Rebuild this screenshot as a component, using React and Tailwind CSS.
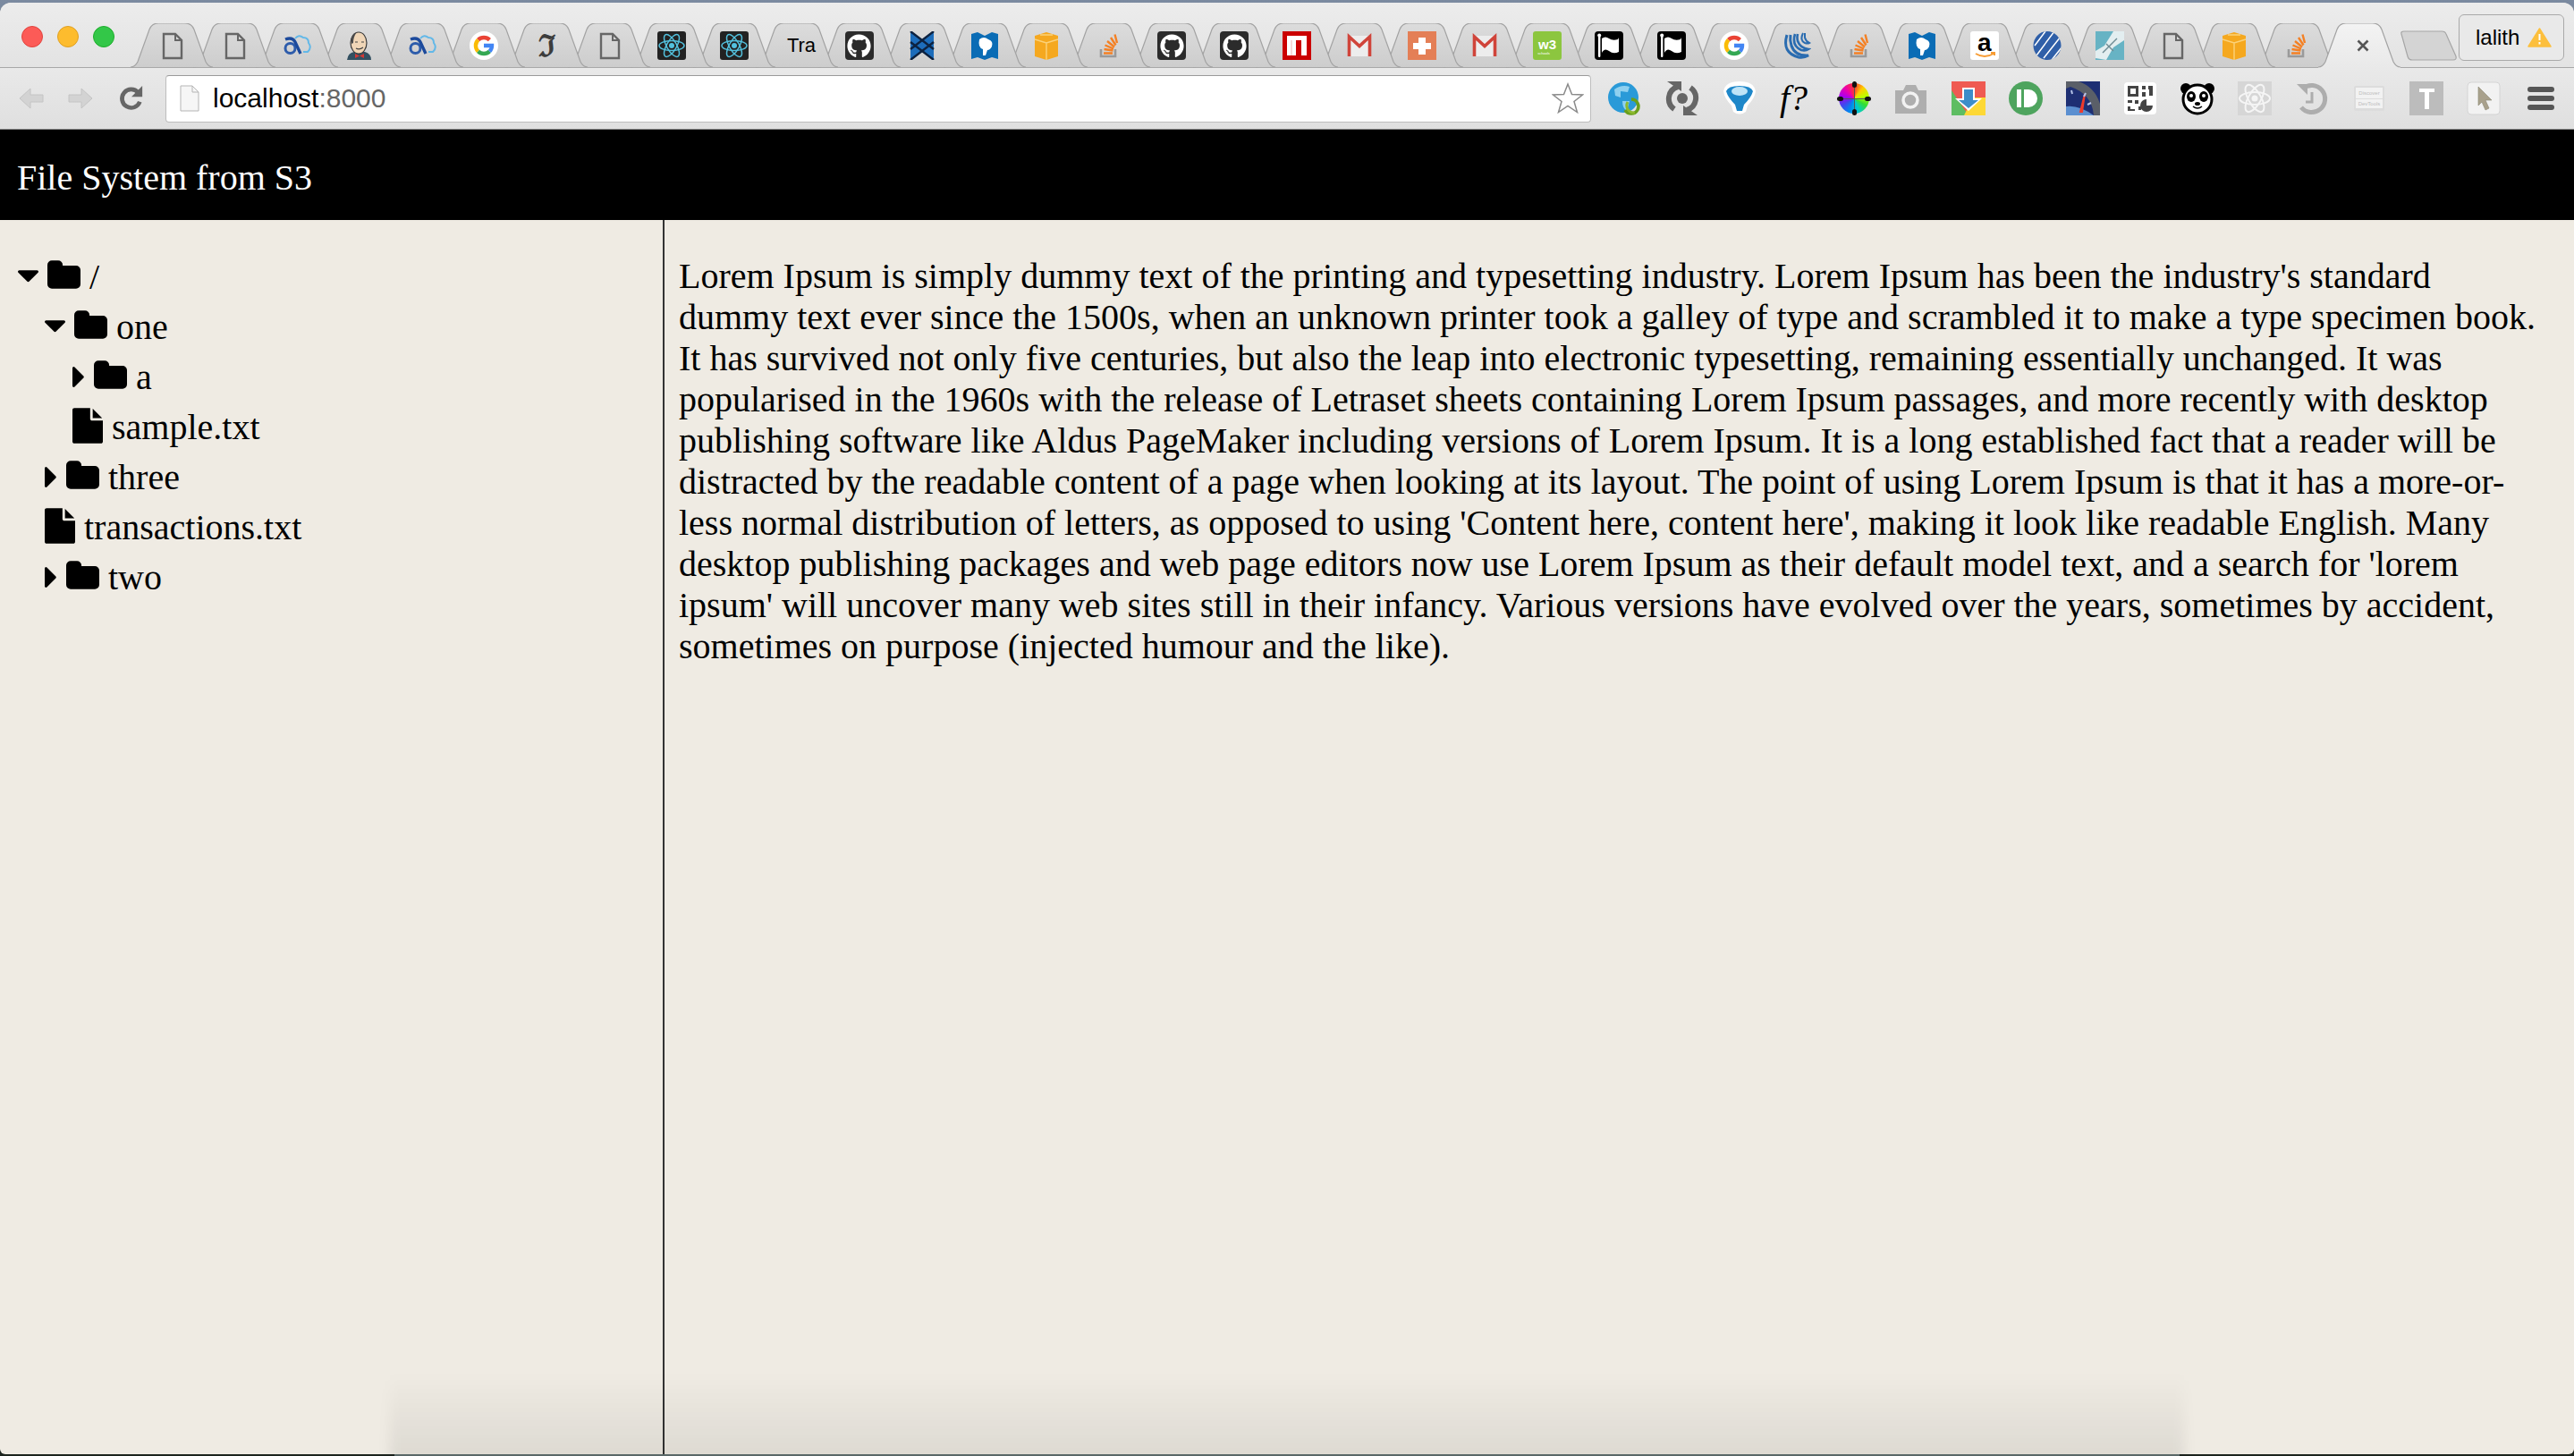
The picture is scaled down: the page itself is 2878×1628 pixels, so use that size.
import React from "react";
import { FaGithub } from "react-icons/fa";

const SERIF = "font-['Liberation_Serif','Times_New_Roman',serif]";
const SANS = "font-['Liberation_Sans',Arial,sans-serif]";

const V = ({ s = 32, children, className = "" }) => (
  <svg width={s} height={s} viewBox={`0 0 ${s} ${s}`} className={`block shrink-0 ${className}`}>{children}</svg>
);

const Page = () => (
  <V><path d="M7 3h13l7 7v20H7z" fill="none" stroke="#666" strokeWidth="2.4" /><path d="M20 3v7h7" fill="none" stroke="#666" strokeWidth="2" /></V>
);
const Atl = () => (
  <V>
    <path d="M14 8Q18 3 23 7Q29 7 29 13Q33 18 28 23H23" fill="none" stroke="#62b8e8" strokeWidth="2" />
    <circle cx="8.5" cy="19" r="5.5" fill="none" stroke="#2d5cab" strokeWidth="3" />
    <path d="M3 9Q11 6 14 12L20 25" fill="none" stroke="#1c4a9c" strokeWidth="3.4" />
  </V>
);
const Jenkins = () => (
  <V>
    <path d="M2 32Q3 24 10 23L22 23Q29 25 29 32z" fill="#335061" />
    <ellipse cx="15" cy="13" rx="9" ry="12" fill="#f0d6b7" stroke="#3a3a3a" strokeWidth="1.2" />
    <path d="M7 14Q5 4 13 1Q9 6 9 13z" fill="#4b4b4b" />
    <path d="M11 12h3M18 12h3M12 19Q16 21 20 18" stroke="#444" strokeWidth="1.2" fill="none" />
    <path d="M11 25l5 2.5l5-2.5v5l-5-2.5l-5 2.5z" fill="#d33833" />
  </V>
);
const G = () => (
  <V>
    <circle cx="16" cy="16" r="16" fill="#fff" />
    <g fill="none" strokeWidth="4.4">
      <path d="M9.6 9.6A9 9 0 0 1 22.4 9.6" stroke="#ea4335" />
      <path d="M9.6 9.6A9 9 0 0 0 9.6 22.4" stroke="#fbbc05" />
      <path d="M9.6 22.4A9 9 0 0 0 22.4 22.4" stroke="#34a853" />
      <path d="M22.4 22.4A9 9 0 0 0 25 16H16" stroke="#4285f4" />
    </g>
  </V>
);
const Fraktur = () => (
  <span className="block w-8 h-8 text-center text-[34px] leading-[32px] text-[#3c3c3c] font-['DejaVu_Serif',serif] font-bold">ℑ</span>
);
const ReactIco = () => (
  <V>
    <rect width="32" height="32" rx="3" fill="#222" />
    <g fill="none" stroke="#53c1de" strokeWidth="1.5">
      <ellipse cx="16" cy="16" rx="14" ry="5.5" />
      <ellipse cx="16" cy="16" rx="14" ry="5.5" transform="rotate(60 16 16)" />
      <ellipse cx="16" cy="16" rx="14" ry="5.5" transform="rotate(120 16 16)" />
    </g>
    <circle cx="16" cy="16" r="3" fill="#53c1de" />
  </V>
);
const Tra = () => <span className={`block w-8 h-8 pl-[5px] text-[22px] leading-[32px] text-black whitespace-nowrap ${SANS}`}>Tra</span>;
const Gh = () => (
  <div className="w-8 h-8 rounded bg-[#2b2b2b] flex items-center justify-center">
    <FaGithub className="text-white text-[27px]" />
  </div>
);
const Backbone = () => (
  <V>
    <polygon points="3,0 16,9 29,0 29,32 16,23 3,32" fill="#1d6dbb" />
    <path d="M3 0L29 20M29 0L3 20M3 12L29 32M29 12L3 32" stroke="#0d2240" strokeWidth="2.4" />
  </V>
);
const Book = () => (
  <V>
    <polygon points="1,3 8,1 16,5 24,1 31,3 31,31 24,29 16,32 8,29 1,31" fill="#0a6cb5" />
    <path d="M10 9Q15 5 20 9Q26 11 24 17Q22 21 19 21L17 27H14L14 20Q8 18 10 9z" fill="#fff" />
  </V>
);
const Box = () => (
  <V>
    <polygon points="16,1 29,5 29,28 16,32 3,28 3,5" fill="#f5a81f" />
    <path d="M3 9L16 13L29 9M16 13V32M9 4L23 4" fill="none" stroke="#fbd27a" strokeWidth="1.4" />
  </V>
);
const So = () => (
  <V>
    <path d="M7 20v8h16v-8" fill="none" stroke="#9a9a9a" strokeWidth="2.6" />
    <path d="M10 24.5h10M10.5 20l10 1.5M11.5 15.5l9.5 4M14 11l8 6.5M18 7l5.5 8.5M22.5 3.5L25 13" stroke="#f48024" strokeWidth="2.4" fill="none" />
  </V>
);
const Npm = () => (
  <V>
    <rect width="32" height="32" fill="#cb0000" />
    <rect x="5" y="5" width="22" height="22" fill="#fff" />
    <rect x="15" y="10" width="6" height="17" fill="#cb0000" />
    <rect x="9" y="10" width="2" height="17" fill="#f7d9d9" />
  </V>
);
const Gmail = () => (
  <V>
    <polygon points="3,5 29,5 29,28 3,28" fill="#ededed" />
    <path d="M4.5 28V6L16 16.5L27.5 6V28" fill="none" stroke="#d0443a" strokeWidth="3.6" />
  </V>
);
const Cross = () => (
  <V>
    <rect width="32" height="32" fill="#e47f56" />
    <path d="M12 7h8v6h6v7h-6v6h-8v-6H6v-7h6z" fill="#fff" />
  </V>
);
const W3 = () => (
  <V>
    <rect width="32" height="32" rx="3" fill="#8cc63f" />
    <text x="16" y="20" textAnchor="middle" fontFamily="Liberation Sans" fontSize="15" fontWeight="700" fill="#fff">w3</text>
    <text x="12" y="26" textAnchor="middle" fontFamily="Liberation Sans" fontSize="4" fill="#fff">schools</text>
  </V>
);
const Flag = () => (
  <V>
    <rect width="32" height="32" rx="4" fill="#000" />
    <rect x="4" y="5" width="2.4" height="24" rx="1.2" fill="#fff" />
    <path d="M8 8Q12 5 16 8T26 9L27 7V23Q21 26 16 22T8 24z" fill="#fff" />
    <circle cx="5.2" cy="4.5" r="2" fill="#fff" />
  </V>
);
const Jq = () => (
  <V>
    <g fill="none" stroke="#2a6cb0">
      <path d="M5 4Q-1 24 18 29Q24 30 29 27Q14 28 10 16Q8 10 9 4" strokeWidth="3" />
      <path d="M14 3Q10 16 21 21Q26 22 29 20Q20 19 17 11Q16 7 17 3" strokeWidth="2.6" />
      <path d="M23 2Q19 10 25 13Q28 14 30 13Q26 11 25 7Q25 4 25 2" strokeWidth="2" />
    </g>
  </V>
);
const Amazon = () => (
  <div className="w-8 h-8 relative rounded-[3px] bg-white">
    <span className={`block text-center text-[28px] leading-[26px] font-bold text-black ${SANS}`}>a</span>
    <svg className="absolute left-0 top-0" width="32" height="32" viewBox="0 0 32 32">
      <path d="M6 25Q16 31 26 25M23 24h4v3" fill="none" stroke="#f79c34" strokeWidth="2" />
    </svg>
  </div>
);
const Stripes = () => (
  <V>
    <clipPath id="stripeclip"><ellipse cx="16" cy="16" rx="15.5" ry="16" /></clipPath>
    <g clipPath="url(#stripeclip)">
      <rect width="32" height="32" fill="#2f5fa8" />
      <path d="M2 16L14 0M4 27L24 0M12 30L31 6M21 32L33 17" stroke="#fff" strokeWidth="1.5" />
    </g>
  </V>
);
const Teal = () => (
  <V>
    <rect x="0" width="32" height="32" fill="#67b3c4" />
    <path d="M32 0L20 0L10 16L0 22V30L12 32L20 18L32 10z" fill="#e3eef0" />
    <path d="M8 24L24 8M12 14L20 22" stroke="#6d8a92" strokeWidth="1.4" />
  </V>
);

const order = [Page, Page, Atl, Jenkins, Atl, G, Fraktur, Page, ReactIco, ReactIco, Tra, Gh, Backbone, Book, Box, So, Gh, Gh, Npm, Gmail, Cross, Gmail, W3, Flag, Flag, G, Jq, So, Book, Amazon, Stripes, Teal, Page, Box, So];

const TAB = "M0 49C4 49 6 47 8 43L21 7C23 2 26 0 31 0H61C66 0 69 2 71 7L84 43C86 47 88 49 92 49";

function Tab({ Icon, i }) {
  return (
    <div className="relative w-[92px] h-[50px] -mb-px mr-[-22.12px] flex items-center justify-center shrink-0" style={{ zIndex: 100 - i }}>
      <svg className="absolute inset-0" width="92" height="50" viewBox="0 0 92 50">
        <defs>
          <linearGradient id="tabfill" x1="0" y1="0" x2="0" y2="1">
            <stop offset="0" stopColor="#dcdcdc" />
            <stop offset="1" stopColor="#cdcdcd" />
          </linearGradient>
        </defs>
        <path d={TAB} fill="url(#tabfill)" stroke="#a3a3a3" strokeWidth="1.2" />
      </svg>
      <div className="relative"><Icon /></div>
    </div>
  );
}

function ActiveTab() {
  return (
    <div className="relative w-[92px] h-[50px] -mb-px mr-[-22px] flex items-center justify-center shrink-0 z-[200]">
      <svg className="absolute inset-0" width="92" height="50" viewBox="0 0 92 50">
        <defs>
          <linearGradient id="activefill" x1="0" y1="0" x2="0" y2="1">
            <stop offset="0" stopColor="#f3f3f3" />
            <stop offset="1" stopColor="#e9e9e9" />
          </linearGradient>
        </defs>
        <path d={`${TAB}V50H0Z`} fill="url(#activefill)" />
        <path d={TAB} fill="none" stroke="#a3a3a3" strokeWidth="1.2" />
      </svg>
      <svg className="relative ml-[8px]" width="14" height="14" viewBox="0 0 14 14">
        <path d="M1.5 1.5L12.5 12.5M12.5 1.5L1.5 12.5" stroke="#555" strokeWidth="2.6" />
      </svg>
    </div>
  );
}

function TabStrip() {
  return (
    <div className="relative flex items-end h-[73px] shrink-0 border-b border-[#a8a8a8] bg-linear-to-b from-[#ececec] to-[#e3e3e3] rounded-t-[12px]">
      <div className="self-start flex gap-[16px] pl-[24px] pt-[26px] w-[146px] shrink-0">
        <div className="w-6 h-6 rounded-full bg-[#fc5b57] border border-[#e0443e]" />
        <div className="w-6 h-6 rounded-full bg-[#fdbc2e] border border-[#dfa023]" />
        <div className="w-6 h-6 rounded-full bg-[#33c748] border border-[#1dad2b]" />
      </div>
      {order.map((Icon, i) => <Tab key={i} Icon={Icon} i={i} />)}
      <ActiveTab />
      <svg className="shrink-0 ml-[21px] mb-[7px]" width="65" height="34" viewBox="0 0 65 34">
        <path d="M2 4Q1 1 5 1H47Q51 1 52 4L63 29Q64 33 60 33H14Q10 33 9 29z" fill="#d4d4d4" stroke="#a6a6a6" strokeWidth="1.2" />
      </svg>
      <div className="self-start shrink-0 ml-auto mr-[11px] mt-[13px] w-[118px] h-[52px] rounded-[6px] border border-[#a9a9a9] bg-[#e9e9e9] flex items-center pl-[18px] gap-[9px]">
        <span className={`text-[24px] text-black leading-none ${SANS}`}>lalith</span>
        <svg width="27" height="22" viewBox="0 0 27 22">
          <path d="M13.5 1L26 21H1z" fill="#fcbf3d" stroke="#fcbf3d" strokeLinejoin="round" strokeWidth="1.5" />
          <path d="M13.5 7v7M13.5 16v2.4" stroke="#fff" strokeWidth="2" />
        </svg>
      </div>
    </div>
  );
}

const Globe = () => (
  <V s={38}>
    <circle cx="17" cy="18" r="17" fill="#2a9ad8" />
    <path d="M7 9Q15 3 24 6L22 12L14 11L14 18L8 16zM16 22L24 22L21 33Q16 30 16 22z" fill="#8fd0ef" />
    <path d="M26 20A8 8 0 1 1 19 32" fill="none" stroke="#6a9f1c" strokeWidth="3.5" />
    <path d="M30 35A8 8 0 0 1 22 23" fill="none" stroke="#8cb92e" strokeWidth="3" />
  </V>
);
const Cycle = () => (
  <V s={38}>
    <g fill="none" stroke="#666" strokeWidth="6">
      <path d="M14 6A14 14 0 0 0 10 31" />
      <path d="M24 32A14 14 0 0 0 28 7" />
    </g>
    <path d="M2 0H18V11zM36 38H20V27z" fill="#666" />
    <circle cx="19" cy="19" r="6" fill="#666" />
  </V>
);
const Funnel = () => (
  <V s={38}>
    <path d="M1 11Q3 0 19 0Q35 0 37 11Q36 19 28 27L26 34Q19 39 12 34L10 27Q2 19 1 11z" fill="#fff" />
    <path d="M4 11Q6 5 19 5Q32 5 34 11Q32 18 24 26L22 33H16L14 26Q6 18 4 11z" fill="#1e87c9" />
    <ellipse cx="19" cy="11" rx="9" ry="5" fill="#bfe4f7" />
  </V>
);
const Fq = () => (
  <span className={`block w-[38px] h-[38px] text-[40px] leading-[38px] italic text-black whitespace-nowrap ${SERIF}`}>f?</span>
);
const Wheel = () => (
  <div className="relative w-[38px] h-[38px]">
    <div className="absolute left-[2px] top-[2px] w-[34px] h-[34px] rounded-full bg-[conic-gradient(#f33,#fc0,#bf0,#3d3,#0cc,#08e,#44e,#a0e,#e0a,#f33)]" />
    <div className="absolute left-[18.5px] top-0 w-px h-[38px] bg-[#555]" />
    <div className="absolute left-0 top-[18.5px] w-[38px] h-px bg-[#555]" />
    <div className="absolute left-[17px] top-0 w-[5px] h-[7px] rounded-full bg-[#111]" />
    <div className="absolute left-[17px] bottom-0 w-[5px] h-[7px] rounded-full bg-[#111]" />
    <div className="absolute left-0 top-[17px] w-[7px] h-[5px] rounded-full bg-[#111]" />
    <div className="absolute right-0 top-[17px] w-[7px] h-[5px] rounded-full bg-[#111]" />
  </div>
);
const Camera = () => (
  <V s={38}>
    <path d="M1 10H10L13 4H24L27 10H36V36H1z" fill="#aeaeae" />
    <circle cx="18" cy="21" r="8" fill="none" stroke="#f2f2f2" strokeWidth="3.5" />
  </V>
);
const Arrow = () => (
  <V s={38}>
    <rect width="38" height="38" fill="#ef5a52" />
    <polygon points="0,10 19,38 0,38" fill="#5ebd62" />
    <polygon points="38,18 38,38 14,38 24,18" fill="#fdd835" />
    <path d="M12 7H26V19H34L19 33L4 19H12z" fill="#fff" />
    <path d="M14 9H24V21H30L19 30L8 21H14z" fill="#3d8dc9" />
  </V>
);
const Pushbullet = () => (
  <V s={38}>
    <circle cx="19" cy="19" r="19" fill="#4ea45e" />
    <rect x="9" y="9" width="5" height="20" fill="#fff" />
    <path d="M17 9H22A10 10 0 0 1 22 29H17z" fill="#fff" />
  </V>
);
const Speed = () => (
  <V s={38}>
    <rect width="38" height="38" fill="#1e2f73" />
    <path d="M0 0H14Q32 6 38 25V38H31Q29 14 5 6L0 8z" fill="#5a5f68" />
    <path d="M0 28Q14 26 31 38H0z" fill="#5b8fd0" />
    <path d="M16 34L21 14L18 34z" fill="#ee3b2b" stroke="#ee3b2b" strokeWidth="2" />
    <path d="M6 10l1 4M22 13l-2 4M28 24l-4 2" stroke="#b6c4e8" strokeWidth="2" />
  </V>
);
const Qr = () => (
  <V s={38}>
    <rect x="1" y="1" width="36" height="36" rx="4" fill="#fff" />
    <g fill="#444">
      <path d="M5 5H17V17H5zM8 8V14H14V8z" fillRule="evenodd" />
      <path d="M21 5h4v4h-4zM28 5h5v4h-5zM29 9h4v7h-4zM21 12h4v5h-4zM5 21h5v3H5zM13 21h4v4h-4zM5 28h3v5H5zM8 31h5v2H8zM17 28h3v4h-3z" />
      <path d="M33 27A7 7 0 1 1 26 20V27z" />
    </g>
  </V>
);
const Panda = () => (
  <V s={38}>
    <circle cx="6" cy="8" r="6" fill="#000" />
    <circle cx="32" cy="8" r="6" fill="#000" />
    <ellipse cx="19" cy="20" rx="16" ry="16" fill="#fff" stroke="#000" strokeWidth="3" />
    <ellipse cx="12" cy="17" rx="5" ry="6" fill="#000" />
    <ellipse cx="26" cy="17" rx="5" ry="6" fill="#000" />
    <circle cx="12" cy="16" r="2" fill="#fff" />
    <circle cx="26" cy="16" r="2" fill="#fff" />
    <ellipse cx="19" cy="25" rx="3" ry="2" fill="#000" />
    <path d="M14 28Q19 32 24 28" fill="none" stroke="#000" strokeWidth="1.5" />
  </V>
);
const ReactGray = () => (
  <V s={38}>
    <rect width="38" height="38" fill="#d6d6d6" />
    <g fill="none" stroke="#f5f5f5" strokeWidth="2">
      <ellipse cx="19" cy="19" rx="17" ry="7" />
      <ellipse cx="19" cy="19" rx="17" ry="7" transform="rotate(60 19 19)" />
      <ellipse cx="19" cy="19" rx="17" ry="7" transform="rotate(120 19 19)" />
    </g>
    <circle cx="19" cy="19" r="3.5" fill="#f5f5f5" />
  </V>
);
const History = () => (
  <V s={38}>
    <path d="M9 8A15 15 0 1 1 7 29" fill="none" stroke="#adadad" strokeWidth="5" />
    <path d="M2 3H14V15z" fill="#adadad" />
    <path d="M19 12V23H12" fill="none" stroke="#adadad" strokeWidth="3" />
  </V>
);
const DevTools = () => (
  <div className={`w-[34px] h-[28px] mx-[2px] my-[5px] rounded-[2px] bg-[#dcdcdc] p-[2px] flex flex-col gap-px text-[6px] leading-[12px] text-center text-[#bdbdbd] overflow-hidden whitespace-nowrap ${SANS}`}>
    <div className="bg-[#f2f2f2] h-[12px]">Discover</div>
    <div className="bg-[#f2f2f2] h-[10px] leading-[10px]">DevTools</div>
  </div>
);
const TIco = () => (
  <V s={38}>
    <rect width="38" height="38" fill="#bcbcbc" />
    <path d="M11 8H28V12H22V31H17V12H11z" fill="#fff" />
  </V>
);
const Cursor = () => (
  <V s={38}>
    <rect x="1" y="1" width="36" height="36" rx="4" fill="#f2f2f2" stroke="#d4d4d4" />
    <path d="M13 6L28 21L21 21L25 30L21 32L17 23L13 27z" fill="#a9a18c" stroke="#8c8674" strokeWidth="0.6" />
  </V>
);
const Menu = () => (
  <div className="w-[38px] h-[38px] px-[4px] flex flex-col justify-center gap-[4px]">
    <div className="h-[6px] rounded-full bg-[#555]" />
    <div className="h-[6px] rounded-full bg-[#555]" />
    <div className="h-[6px] rounded-full bg-[#555]" />
  </div>
);

const tools = [Globe, Cycle, Funnel, Fq, Wheel, Camera, Arrow, Pushbullet, Speed, Qr, Panda, ReactGray, History, DevTools, TIco, Cursor, Menu];

function Toolbar() {
  return (
    <div className="flex items-center h-[69px] shrink-0 bg-linear-to-b from-[#e9e9e9] to-[#dfdfdf] border-b border-[#8a8a8a]">
      <div className="flex items-center w-[185px] shrink-0 pl-[20px]">
        <svg width="30" height="26" viewBox="0 0 30 26">
          <path d="M14 2L2 13L14 24V17H28V9H14z" fill="#d3d3d3" stroke="#c4c4c4" />
        </svg>
        <svg className="ml-[25px]" width="30" height="26" viewBox="0 0 30 26">
          <path d="M16 2L28 13L16 24V17H2V9H16z" fill="#d3d3d3" stroke="#c4c4c4" />
        </svg>
        <svg className="ml-[28px]" width="28" height="32" viewBox="0 0 30 32">
          <path d="M23 9A11 11 0 1 0 25 20" fill="none" stroke="#666" strokeWidth="5" />
          <path d="M28 1V14H15z" fill="#666" />
        </svg>
      </div>
      <div className="flex items-center w-[1594px] h-[53px] shrink-0 bg-white rounded-[4px] border border-[#bdbdbd] border-t-[#9a9a9a] pl-[15px] pr-[7px]">
        <svg width="22" height="30" viewBox="0 0 22 30">
          <path d="M1 1H14L21 8V29H1z" fill="#f6f6f6" stroke="#b5b5b5" />
          <path d="M14 1V8H21" fill="none" stroke="#b5b5b5" />
        </svg>
        <span className={`ml-[15px] text-[30px] leading-none text-black ${SANS}`}>
          localhost<span className="text-[#666]">:8000</span>
        </span>
        <svg className="ml-auto" width="36" height="36" viewBox="0 0 36 36">
          <path d="M18 2L22.5 13.5L34.5 14L25 21.5L28.5 33.5L18 26.5L7.5 33.5L11 21.5L1.5 14L13.5 13.5z" fill="#fff" stroke="#8a8a8a" strokeWidth="1.5" />
        </svg>
      </div>
      <div className="flex items-center gap-[26px] ml-[19px]">
        {tools.map((T, i) => <T key={i} />)}
      </div>
    </div>
  );
}

const Caret = ({ down }) => down ? (
  <svg className="w-[23px] h-[23px] shrink-0" viewBox="384 448 1024 1024"><path d="M1408 704q0 26-19 45l-448 448q-19 19-45 19t-45-19l-448-448q-19-19-19-45t19-45 45-19h896q26 0 45 19t19 45z" /></svg>
) : (
  <svg className="w-[14px] h-[23px] shrink-0" viewBox="576 384 630 1024" preserveAspectRatio="xMinYMid meet"><path d="M1152 896q0 26-19 45l-448 448q-19 19-45 19t-45-19-19-45v-896q0-26 19-45t45-19 45 19l448 448q19 19 19 45z" /></svg>
);
const Folder = () => (
  <svg className="w-[37px] h-[32px] shrink-0 -mt-[4px]" viewBox="64 128 1664 1408"><path d="M1728 608v704q0 92-66 158t-158 66h-1216q-92 0-158-66t-66-158v-960q0-92 66-158t158-66h320q92 0 158 66t66 158v32h672q92 0 158 66t66 158z" /></svg>
);
const File = () => (
  <svg className="w-[34px] h-[40px] shrink-0 -mt-[2px]" viewBox="128 0 1536 1792"><path d="M1152 512v-472q22 14 36 28l408 408q14 14 28 36h-472zm-128 32q0 40 28 68t68 28h544v1056q0 40-28 68t-68 28h-1344q-40 0-68-28t-28-68v-1600q0-40 28-68t68-28h800v544z" /></svg>
);

const tree = [
  { label: "/", depth: 0, type: "open" },
  { label: "one", depth: 1, type: "open" },
  { label: "a", depth: 2, type: "closed" },
  { label: "sample.txt", depth: 2, type: "file" },
  { label: "three", depth: 1, type: "closed" },
  { label: "transactions.txt", depth: 1, type: "file" },
  { label: "two", depth: 1, type: "closed" },
];

const PL = ["pl-[20px]", "pl-[50px]", "pl-[81px]"];

function Tree() {
  return (
    <div className="w-[741px] shrink-0 pt-[35px]">
      {tree.map((n) => (
        <div key={n.label} className={`flex items-center gap-[10px] h-[56px] ${PL[n.depth]}`}>
          {n.type === "file" ? <File /> : <Caret down={n.type === "open"} />}
          {n.type !== "file" && <Folder />}
          <span className="text-[40px] leading-[46px] text-black pt-[2px]">{n.label}</span>
        </div>
      ))}
    </div>
  );
}

const LOREM = "Lorem Ipsum is simply dummy text of the printing and typesetting industry. Lorem Ipsum has been the industry's standard dummy text ever since the 1500s, when an unknown printer took a galley of type and scrambled it to make a type specimen book. It has survived not only five centuries, but also the leap into electronic typesetting, remaining essentially unchanged. It was popularised in the 1960s with the release of Letraset sheets containing Lorem Ipsum passages, and more recently with desktop publishing software like Aldus PageMaker including versions of Lorem Ipsum. It is a long established fact that a reader will be distracted by the readable content of a page when looking at its layout. The point of using Lorem Ipsum is that it has a more-or-less normal distribution of letters, as opposed to using 'Content here, content here', making it look like readable English. Many desktop publishing packages and web page editors now use Lorem Ipsum as their default model text, and a search for 'lorem ipsum' will uncover many web sites still in their infancy. Various versions have evolved over the years, sometimes by accident, sometimes on purpose (injected humour and the like).";

export default function App() {
  return (
    <div className="relative w-[2878px] h-[1628px] overflow-hidden bg-linear-to-b from-[#7b8aa0] via-[#2a332b] to-[#1c241e] pt-[3px] pb-[2px]">
      <div className={`flex flex-col h-full rounded-t-[12px] rounded-b-[6px] overflow-hidden bg-[#efebe3] ${SERIF}`}>
        <TabStrip />
        <Toolbar />
        <div className="h-[101px] shrink-0 bg-black flex items-center pl-[19px] pt-[6px] text-white text-[40px]">File System from S3</div>
        <div className="flex-1 flex min-h-0">
          <Tree />
          <div className="flex-1 border-l-2 border-[#333] pl-[16px] pr-[36px] pt-[40px] text-[40px] leading-[46px] text-black">{LOREM}</div>
        </div>
      </div>
      <div className="absolute left-[436px] w-[2006px] bottom-[-8px] h-[100px] blur-[7px] bg-linear-to-t from-[#00000014] to-transparent" />
      <div className="absolute left-[441px] w-[1996px] bottom-0 h-[2px] bg-[#5a6868]" />
    </div>
  );
}
